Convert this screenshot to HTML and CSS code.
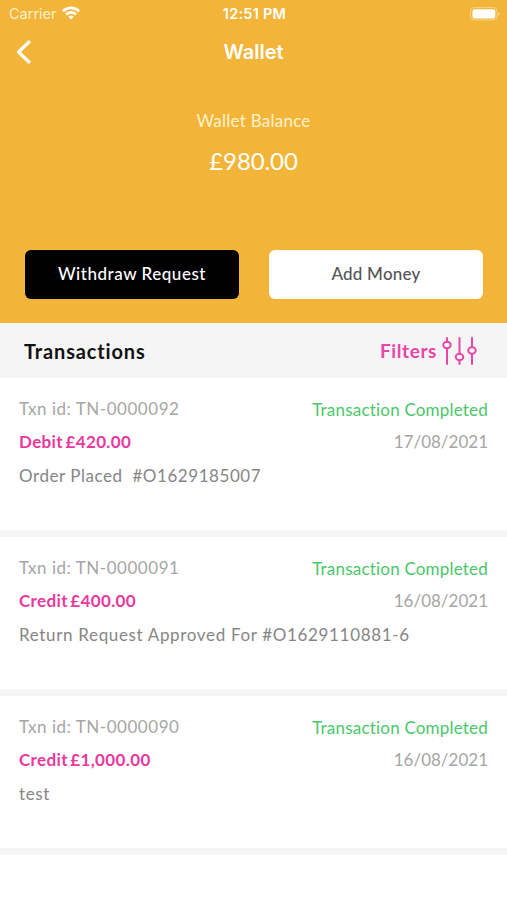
FILE: index.html
```html
<!DOCTYPE html>
<html lang="en">
<head>
<meta charset="utf-8">
<title>Wallet</title>
<link rel="stylesheet" href="styles.css">
</head>
<body>
<header class="hero">
  <div class="status">
    <div class="carrier"><span class="carrier-name">Carrier</span>
      <svg class="wifi" width="18" height="14" viewBox="0 0 18 14" fill="none" stroke="#fff" stroke-width="2.7"><path d="M.9 5.2a11.6 11.6 0 0 1 16.2 0M4 8.5a7.1 7.1 0 0 1 10 0"/><path d="M6.3 10.7a3.9 3.9 0 0 1 5.4 0L9 13.4Z" fill="#fff" stroke="none"/></svg>
    </div>
    <time class="clock">12:51 PM</time>
    <svg class="battery" width="30" height="14" viewBox="0 0 30 14"><rect x=".6" y=".6" width="26.4" height="12.3" rx="3.5" fill="none" stroke="#fff" stroke-opacity=".4"/><rect x="2.5" y="2.2" width="22.8" height="9.2" rx="2" fill="#fff"/><path d="M28.3 4.7q1.500.7 1.500 2.200T28.300 9.100Z" fill="#fff" fill-opacity=".45"/></svg>
  </div>
  <nav class="nav">
    <svg class="back" width="16" height="24" viewBox="0 0 16 24" fill="none" stroke="#fff" stroke-width="3.2" stroke-linecap="round" stroke-linejoin="round"><path d="M13 2 2.500 12 13 22"/></svg>
    <h1 class="title">Wallet</h1>
  </nav>
  <div class="label"><span>Wallet Balance</span></div>
  <div class="balance"><span>£980.00</span></div>
  <div class="actions">
    <button class="btn dark"><span>Withdraw Request</span></button>
    <button class="btn light"><span>Add Money</span></button>
  </div>
</header>
<section class="bar">
  <h2 class="heading">Transactions</h2>
  <div class="filters"><span class="filters-text">Filters</span>
    <svg width="36" height="30" viewBox="0 0 36 30" fill="none" stroke="#e846a8" stroke-width="2" stroke-linecap="round"><path d="M5 2v3.500M5 12.500V28M17.500 2v15.500M17.500 24.500V28M30 2v9M30 18v10"/><ellipse cx="5" cy="9" rx="3.700" ry="3.200"/><ellipse cx="17.500" cy="21" rx="3.700" ry="3.200"/><ellipse cx="30" cy="14.500" rx="3.700" ry="3.200"/></svg>
  </div>
</section>
<main>
  <article class="txn">
    <div class="row"><span class="id">Txn id: TN-0000092</span><span class="state">Transaction Completed</span></div>
    <div class="row"><span class="amount">Debit £420.00</span><time class="date">17/08/2021</time></div>
    <div class="row"><span class="note order">Order Placed&nbsp; #O1629185007</span></div>
  </article>
  <article class="txn">
    <div class="row"><span class="id">Txn id: TN-0000091</span><span class="state">Transaction Completed</span></div>
    <div class="row"><span class="amount">Credit £400.00</span><time class="date">16/08/2021</time></div>
    <div class="row"><span class="note">Return Request Approved For #O1629110881-6</span></div>
  </article>
  <article class="txn">
    <div class="row"><span class="id">Txn id: TN-0000090</span><span class="state">Transaction Completed</span></div>
    <div class="row"><span class="amount">Credit £1,000.00</span><time class="date">16/08/2021</time></div>
    <div class="row"><span class="note">test</span></div>
  </article>
</main>
</body>
</html>
```
FILE: styles.css
```css
* { box-sizing: border-box; }
body { margin: 0; background: #fff; font: 17px/24px Lato, sans-serif; font-variant-ligatures: none; }
h1, h2 { margin: 0; }
svg { display: block; }
.hero { height: 323px; background: #f2b539; color: #fff; }
.status { height: 28px; padding: 0 7px 0 9px; display: grid; grid-template-columns: 1fr auto 1fr; align-items: center; font-family: Inter, sans-serif; }
.carrier { display: flex; align-items: center; gap: 6px; font-size: 14.5px; color: #fff0ca; }
.wifi { margin: -3px 0 0 -1px; }
.clock { font-size: 14.5px; font-weight: 600; letter-spacing: .25px; }
.battery { justify-self: end; }
.nav { height: 48px; padding: 0 16px; display: grid; grid-template-columns: 24px 1fr 24px; align-items: center; }
.title { font: 600 20px/28px Inter, sans-serif; text-align: center; }
.label { margin-top: 33px; text-align: center; color: #fff1cc; letter-spacing: .25px; }
.balance { margin-top: 14px; text-align: center; font-size: 24px; line-height: 28px; letter-spacing: -.1px; }
.actions { margin: 75px 24px 0 25px; display: grid; grid-template-columns: 1fr 1fr; gap: 30px; }
.btn { height: 49px; padding: 0 0 1px; border: 0; border-radius: 6px; font: 500 17px/24px Lato, sans-serif; }
.dark { background: #000; color: #fff; letter-spacing: .53px; }
.light { background: #fff; color: #555; letter-spacing: .2px; }
.bar { height: 55px; padding: 0 29px 0 24px; background: #f5f5f5; display: flex; align-items: center; justify-content: space-between; }
.heading { font-size: 20px; font-weight: 700; color: #111; letter-spacing: .85px; }
.filters { display: flex; align-items: center; gap: 5px; color: #e846a8; font-size: 19px; font-weight: 700; letter-spacing: .6px; }
.txn { height: 159px; padding: 19px 19px 0; border-bottom: 7px solid #f5f5f5; }
.row { height: 33.4px; display: flex; justify-content: space-between; white-space: nowrap; }
.id, .date { color: #a6a6a6; }
.id { letter-spacing: .53px; }
.state { color: #4bc76a; padding-top: 1px; letter-spacing: .2px; }
.amount { color: #e9399f; font-weight: 700; letter-spacing: .36px; word-spacing: -2px; }
.note { color: #868686; letter-spacing: .66px; }
.order { letter-spacing: .55px; }
```
